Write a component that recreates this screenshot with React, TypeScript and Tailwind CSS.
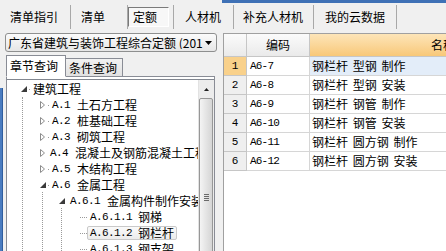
import React from "react";

interface TreeNode {
  level: number;
  code: string;
  name: string;
  state: "open" | "closed" | "leaf";
  selected?: boolean;
}

interface QuotaRow {
  no: number;
  code: string;
  name: string;
}

const treeNodes: TreeNode[] = [
  { level: 0, code: "", name: "建筑工程", state: "open" },
  { level: 1, code: "A.1", name: "土石方工程", state: "closed" },
  { level: 1, code: "A.2", name: "桩基础工程", state: "closed" },
  { level: 1, code: "A.3", name: "砌筑工程", state: "closed" },
  { level: 1, code: "A.4", name: "混凝土及钢筋混凝土工程", state: "closed" },
  { level: 1, code: "A.5", name: "木结构工程", state: "closed" },
  { level: 1, code: "A.6", name: "金属工程", state: "open" },
  { level: 2, code: "A.6.1", name: "金属构件制作安装", state: "open" },
  { level: 3, code: "A.6.1.1", name: "钢梯", state: "leaf" },
  { level: 3, code: "A.6.1.2", name: "钢栏杆", state: "leaf", selected: true },
  { level: 3, code: "A.6.1.3", name: "钢支架", state: "leaf" },
];

const rows: QuotaRow[] = [
  { no: 1, code: "A6-7", name: "钢栏杆 型钢 制作" },
  { no: 2, code: "A6-8", name: "钢栏杆 型钢 安装" },
  { no: 3, code: "A6-9", name: "钢栏杆 钢管 制作" },
  { no: 4, code: "A6-10", name: "钢栏杆 钢管 安装" },
  { no: 5, code: "A6-11", name: "钢栏杆 圆方钢 制作" },
  { no: 6, code: "A6-12", name: "钢栏杆 圆方钢 安装" },
];

const indent = ["pl-[14px]", "pl-[33px]", "pl-[52px]", "pl-[73px]"];

const Expander = ({ open }: { open: boolean }) => (
  <span className="w-[6px] flex items-center">
    {open ? (
      <svg width="6" height="6" viewBox="0 0 6 6">
        <path d="M6 0V6H0Z" fill="#3a3a3a" />
      </svg>
    ) : (
      <svg width="5" height="8" viewBox="0 0 5 8">
        <path d="M0.5 0.5L4.5 4L0.5 7.5Z" fill="white" stroke="#8c8c8c" />
      </svg>
    )}
  </span>
);

const Code = ({ text }: { text: string }) => (
  <span className="font-['Liberation_Mono',monospace] text-[11px] tracking-[-0.6px]">
    {text}
  </span>
);

const TreeRow = ({ node }: { node: TreeNode }) => {
  const { level, code, name, state, selected } = node;
  return (
    <div className={`h-[16px] flex items-center whitespace-nowrap ${indent[level]}`}>
      {state === "leaf" ? (
        <>
          <span className="w-[7px] border-t border-dotted border-[#9a9a9a]" />
          <span
            className={`h-[14px] flex items-center px-[2px] rounded-[2px] border ${
              selected
                ? "border-[#c9c9c9] bg-gradient-to-b from-[#fafafa] to-[#ececec]"
                : "border-transparent"
            }`}
          >
            <Code text={code} />
            <span className="ml-[6px]">{name}</span>
          </span>
        </>
      ) : (
        <>
          <Expander open={state === "open"} />
          <span className="ml-[2px] w-[1px] h-[1px] bg-[#9a9a9a] mr-[3px]" />
          {code && <Code text={code} />}
          <span className={code ? "ml-[7px]" : ""}>{name}</span>
        </>
      )}
    </div>
  );
};

export default function App() {
  return (
    <div className="w-[446px] h-[251px] overflow-hidden bg-[#f0f0f0] flex flex-col font-['Noto_Sans_CJK_SC',sans-serif] text-[12px] leading-none text-black">
      <div className="flex h-[3px] shrink-0">
        <div className="w-[222px]" />
        <div className="flex-1 bg-[#3f71b6]" />
      </div>

      <div className="flex h-[28px] shrink-0 py-[2px] pl-[4px]">
        <div className="w-[67px] border-r border-[#a8a8a8] pl-[6px] flex items-center">清单指引</div>
        <div className="w-[57px] border-r border-[#a8a8a8] pl-[10px] flex items-center">清单</div>
        <div className="w-[46px] border-r border-[#a8a8a8] flex items-center">
          <div className="w-[41px] h-[20px] border border-t-[#7a7a7a] border-l-[#7a7a7a] border-r-white border-b-white bg-[#f7f7f7] pl-[4px] flex items-center">
            定额
          </div>
        </div>
        <div className="w-[60px] border-r border-[#a8a8a8] pl-[11px] flex items-center">人材机</div>
        <div className="w-[80px] border-r border-[#a8a8a8] pl-[9px] flex items-center">补充人材机</div>
        <div className="w-[83px] border-r border-[#a8a8a8] pl-[11px] flex items-center">我的云数据</div>
      </div>

      <div className="flex flex-1 min-h-0">
        <div className="w-[223px] shrink-0 flex">
          <div className="w-[3px] mt-[57px] bg-[#4a7cc0] border-r border-[#2f5d9e]" />
          <div className="flex-1 flex flex-col min-h-0">
            <div className="mt-[2px] ml-[2px] w-[212px] h-[19px] shrink-0 rounded-[3px] border border-[#8e8f8f] bg-gradient-to-b from-[#fbfbfb] to-[#e6e6e6] flex items-center pl-[2px] pr-[3px]">
              <span className="flex-1 whitespace-nowrap overflow-hidden">广东省建筑与装饰工程综合定额 (201</span>
              <svg width="8" height="4" viewBox="0 0 8 4">
                <path d="M0 0H7L3.5 4Z" fill="#000" />
              </svg>
            </div>

            <div className="mt-[3px] ml-[3px] flex items-end -mb-px relative z-10 shrink-0">
              <div className="w-[60px] h-[22px] bg-white border border-[#898c95] border-b-white pl-[3px] flex items-center">
                章节查询
              </div>
              <div className="w-[57px] h-[19px] bg-gradient-to-b from-[#f2f2f2] to-[#e1e1e1] border border-l-0 border-[#898c95] pl-[3px] flex items-center">
                条件查询
              </div>
            </div>

            <div className="ml-[3px] w-[209px] flex-1 min-h-0 border-l border-r border-t border-[#898c95] bg-white pt-[2px] flex flex-col">
              <div className="flex-1 min-h-0 border-t border-[#828790] flex">
                <div className="w-[191px] relative overflow-hidden pt-[1px]">
                  <div className="absolute left-[15px] top-[17px] bottom-0 border-l border-dotted border-[#9a9a9a]" />
                  <div className="absolute left-[35px] top-[112px] bottom-0 border-l border-dotted border-[#9a9a9a]" />
                  <div className="absolute left-[54px] top-[128px] bottom-0 border-l border-dotted border-[#9a9a9a]" />
                  {treeNodes.map((node) => (
                    <TreeRow key={node.code + node.name} node={node} />
                  ))}
                </div>
                <div className="w-[16px] overflow-hidden bg-[#ececec] border-l border-[#e2e2e2] flex flex-col">
                  <div className="h-[18px] shrink-0 flex items-center justify-center">
                    <svg width="5" height="3" viewBox="0 0 5 3">
                      <path d="M2.5 0L5 3H0Z" fill="#222" />
                    </svg>
                  </div>
                  <div className="h-[220px] shrink-0 ml-[0px] mr-[1px] rounded-[2px] border border-[#979797] bg-gradient-to-r from-[#f4f4f4] to-[#d5d5d5] flex flex-col items-center pt-[95px] gap-[1px]">
                    <span className="w-[5px] h-[1px] bg-[#6a6a6a]" />
                    <span className="w-[5px] h-[1px] bg-[#6a6a6a]" />
                    <span className="w-[5px] h-[1px] bg-[#6a6a6a]" />
                    <span className="w-[5px] h-[1px] bg-[#6a6a6a]" />
                  </div>
                </div>
              </div>
            </div>
          </div>
        </div>

        <div className="flex-1 mt-[2px] border-l border-t border-[#a0a0a0] bg-white flex flex-col overflow-hidden">
          <div className="flex h-[23px] shrink-0 border-b border-[#c6c6c6]">
            <div className="w-[23px] shrink-0 border-r border-[#c6c6c6] bg-gradient-to-b from-[#fbfbfb] to-[#eaeaea]" />
            <div className="w-[63px] shrink-0 border-r border-[#c6c6c6] bg-gradient-to-b from-[#fbfbfb] to-[#eaeaea] flex items-center justify-center">
              编码
            </div>
            <div className="w-[266px] shrink-0 bg-gradient-to-b from-[#fde5b8] to-[#f8c878] flex items-center justify-center">
              名称
            </div>
          </div>
          {rows.map((row) => (
            <div key={row.no} className="flex h-[19px] shrink-0">
              <div
                className={`w-[23px] shrink-0 border-r border-b border-[#c6c6c6] flex items-center justify-center ${
                  row.no === 1 ? "bg-[#f9d18b]" : "bg-[#efefef]"
                }`}
              >
                <span className="font-['Liberation_Mono',monospace] text-[11px]">{row.no}</span>
              </div>
              <div className="w-[63px] shrink-0 border-r border-b border-[#d6d6d6] pl-[3px] flex items-center">
                <span className="font-['Liberation_Mono',monospace] text-[11px] tracking-[-0.8px]">{row.code}</span>
              </div>
              <div
                className={`w-[266px] shrink-0 border-b border-[#d6d6d6] pl-[2px] flex items-center whitespace-pre [word-spacing:2px] ${
                  row.no === 1 ? "bg-[#e3edf9]" : ""
                }`}
              >
                {row.name}
              </div>
            </div>
          ))}
        </div>
      </div>
    </div>
  );
}
